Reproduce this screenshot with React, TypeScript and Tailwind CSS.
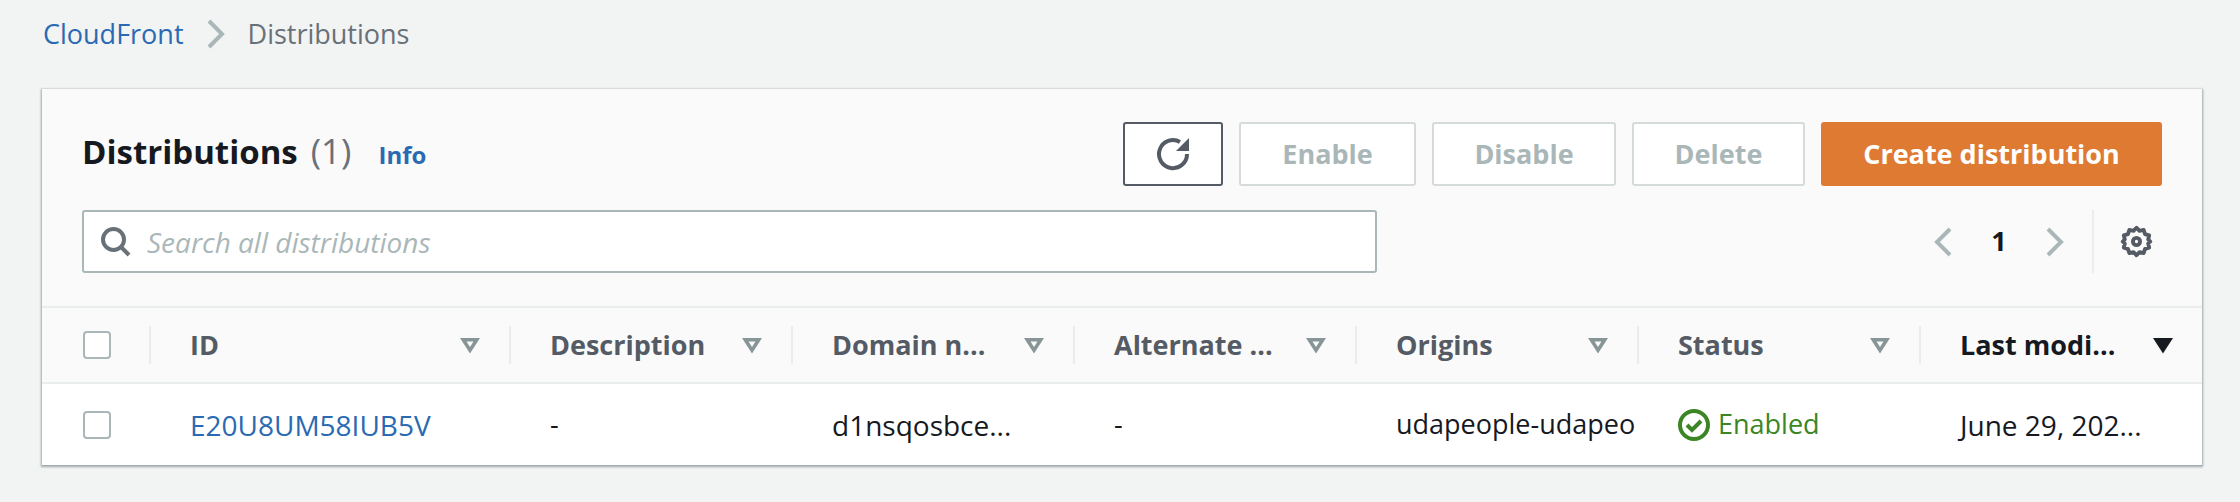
const font = "font-['Open_Sans','Noto_Sans',sans-serif]";

const columns = [
  { label: 'ID', value: 'E20U8UM58IUB5V', link: true, size: 'text-[28px]' },
  { label: 'Description', value: '-', size: 'text-[27px]' },
  { label: 'Domain n...', value: 'd1nsqosbce...', size: 'text-[28px]' },
  { label: 'Alternate ...', value: '-', size: 'text-[27px]' },
  { label: 'Origins', value: 'udapeople-udapeo', size: 'text-[27px]' },
  { label: 'Status', value: 'Enabled', status: true, size: 'text-[27px]' },
  { label: 'Last modi...', value: 'June 29, 202...', sorted: true, size: 'text-[28px]' },
];

function FilterIcon({ active }: { active?: boolean }) {
  return (
    <svg width="22" height="17" viewBox="0 0 22 17" className={active ? 'text-[#16191f]' : 'text-[#879596]'}>
      {active ? (
        <path d="M1 1h20L11 16.500z" fill="currentColor" />
      ) : (
        <path fillRule="evenodd" d="M1 1h20L11 16.500zM7.500 4.500h7L11 10z" fill="currentColor" />
      )}
    </svg>
  );
}

function Checkbox() {
  return <div className="h-[28px] w-[28px] rounded-[4px] border-2 border-[#aab7b8] bg-white" />;
}

function Chevron({ left }: { left?: boolean }) {
  return (
    <svg width="18" height="30" viewBox="0 0 18 30" fill="none" stroke="#aab7b8" strokeWidth="4">
      <path d={left ? 'M16 2 3 15l13 13' : 'M2 2l13 13L2 28'} />
    </svg>
  );
}

function ActionButton({ label, width }: { label: string; width: string }) {
  return (
    <div className={`flex h-[64px] items-center justify-center rounded-[3px] border-2 border-[#d5dbdb] bg-white text-[27px] font-bold text-[#aab7b8] ${width}`}>
      {label}
    </div>
  );
}

export default function App() {
  return (
    <div className={`h-[502px] w-[2240px] overflow-hidden bg-[#f2f3f3] ${font}`}>
      <div className="flex h-[68px] items-center px-[43px] text-[27px]">
        <span className="text-[#2a6ab2]">CloudFront</span>
        <span className="mx-[23px]">
          <Chevron />
        </span>
        <span className="text-[#687078]">Distributions</span>
      </div>
      <div className="ml-[42px] mt-[21px] w-[2160px] bg-white shadow-[0_1px_2px_1px_rgba(0,28,36,0.35)]">
        <div className="h-[219px] border-b-2 border-[#eaeded] bg-[#fafafa] pl-[40px] pr-[40px] pt-[33px]">
          <div className="flex items-center justify-between">
            <div className="flex items-baseline pb-[5px]">
              <span className="text-[33px] font-bold text-[#16191f]">Distributions</span>
              <span className="ml-[13px] text-[35px] text-[#687078]">(1)</span>
              <span className="ml-[27px] text-[24px] font-bold text-[#2a6ab2]">Info</span>
            </div>
            <div className="flex items-center gap-[16px]">
              <div className="flex h-[64px] w-[100px] items-center justify-center rounded-[3px] border-2 border-[#545b64] bg-white">
                <svg width="34" height="34" viewBox="0 0 34 34" fill="none" stroke="#545b64" strokeWidth="4">
                  <path d="M31 17A14 14 0 1 1 24 5" />
                  <path d="M33 1v13H20z" fill="#545b64" stroke="none" />
                </svg>
              </div>
              <ActionButton label="Enable" width="w-[177px]" />
              <ActionButton label="Disable" width="w-[184px]" />
              <ActionButton label="Delete" width="w-[173px]" />
              <div className="flex h-[64px] w-[341px] items-center justify-center rounded-[3px] bg-[#df7a32] text-[27px] font-bold text-white">
                Create distribution
              </div>
            </div>
          </div>
          <div className="mt-[24px] flex items-center justify-between">
            <div className="flex h-[63px] w-[1295px] items-center rounded-[3px] border-2 border-[#aab7b8] bg-white pl-[17px]">
              <svg width="30" height="30" viewBox="0 0 30 30" fill="none" stroke="#687078" strokeWidth="4">
                <circle cx="12.500" cy="12.500" r="10.500" />
                <path d="M19.500 19.500 28 28" />
              </svg>
              <span className="ml-[16px] text-[28px] italic text-[#aab7b8]">Search all distributions</span>
            </div>
            <div className="flex h-[63px] items-center pr-[9px]">
              <Chevron left />
              <span className="flex w-[94px] justify-center text-[27px] font-bold text-[#16191f]">1</span>
              <Chevron />
              <div className="ml-[28px] h-full w-[2px] bg-[#eaeded]" />
              <svg className="ml-[26px]" width="33" height="33" viewBox="0 0 24 24" fill="none" stroke="#545b64" strokeWidth="2.800">
                <path d="M12 2l2.200 2.300 3-.7 1 3 3 1-.7 2.900L22 12l-1.500 1.500.7 2.900-3 1-1 3-3-.7L12 22l-2.200-2.300-3 .7-1-3-3-1 .7-2.900L2 12l1.500-1.500-.7-2.900 3-1 1-3 3 .7z" strokeLinejoin="round" />
                <circle cx="12" cy="12" r="2.600" />
              </svg>
            </div>
          </div>
        </div>
        <div className="grid h-[76px] grid-cols-[107px_360px_repeat(5,282px)_283px] items-center border-b-2 border-[#eaeded] bg-[#fafafa]">
          <div className="pl-[41px]">
            <Checkbox />
          </div>
          {columns.map((c) => (
            <div key={c.label} className="flex h-[38px] items-center justify-between border-l-2 border-[#eaeded] pl-[39px] pr-[28px]">
              <span className={`text-[27px] font-bold ${c.sorted ? 'text-[#16191f]' : 'text-[#545b64]'}`}>{c.label}</span>
              <FilterIcon active={c.sorted} />
            </div>
          ))}
        </div>
        <div className="grid h-[81px] grid-cols-[107px_360px_repeat(5,282px)_283px] items-center">
          <div className="pl-[41px]">
            <Checkbox />
          </div>
          {columns.map((c) => (
            <div key={c.label} className={`pl-[41px] whitespace-nowrap text-[#16191f] ${c.size}`}>
              {c.status ? (
                <span className="flex items-center gap-[8px] text-[#3b8524]">
                  <svg width="32" height="32" viewBox="0 0 32 32" fill="none" stroke="#3b8524" strokeWidth="4">
                    <circle cx="16" cy="16" r="14" />
                    <path d="M9 16l5 5 9-9" />
                  </svg>
                  {c.value}
                </span>
              ) : (
                <span className={c.link ? 'text-[#2a6ab2]' : ''}>{c.value}</span>
              )}
            </div>
          ))}
        </div>
      </div>
    </div>
  );
}
